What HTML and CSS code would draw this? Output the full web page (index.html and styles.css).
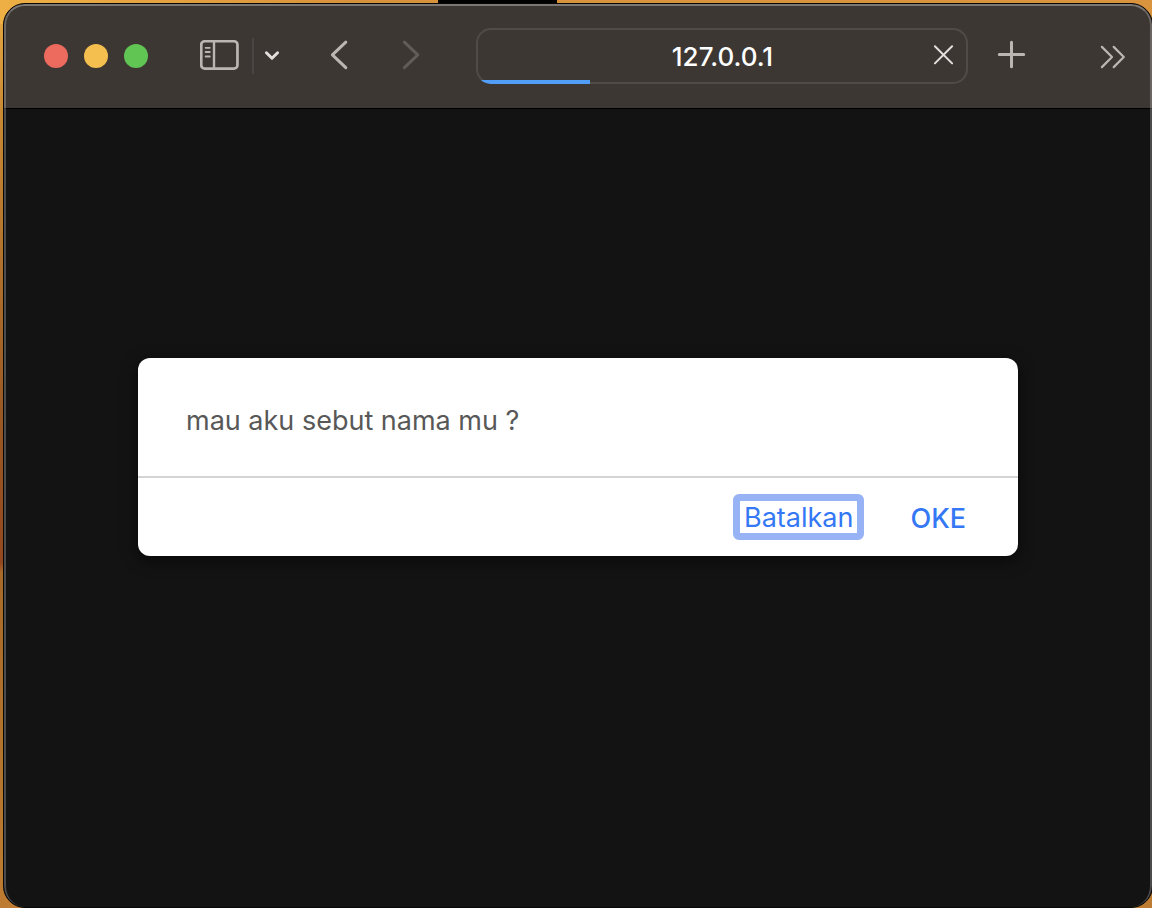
FILE: index.html
```html
<!DOCTYPE html>
<html lang="id">
<head>
<meta charset="utf-8">
<meta name="viewport" content="width=device-width, initial-scale=1">
<title>127.0.0.1</title>
<link rel="stylesheet" href="styles.css">
</head>
<body class="desktop">
<div class="notch"></div>
<div class="window">
  <header class="toolbar">
    <div class="lights">
      <button class="light close" aria-label="Tutup"></button>
      <button class="light minimize" aria-label="Perkecil"></button>
      <button class="light expand" aria-label="Perbesar"></button>
    </div>
    <button class="tool sidebar" aria-label="Bar samping">
      <svg width="40" height="32" viewBox="0 0 40 32" fill="none" stroke="#bcb6b2"><rect x="1.25" y="1.25" width="36.2" height="27.4" rx="3.5" stroke-width="2.7"/><path d="M14 1v28" stroke-width="2.4"/><path d="M5.6 7.8h4.2M5.6 12h4.2M5.6 16.5h4.2" stroke-width="1.8" stroke-linecap="round"/></svg>
    </button>
    <span class="divider"></span>
    <button class="tool groups" aria-label="Grup tab">
      <svg width="16" height="32" viewBox="0 0 16 32" fill="none" stroke="#e2dfdd" stroke-width="2.9" stroke-linecap="round" stroke-linejoin="round"><path d="M2.4 12.7 8 18.3l5.6-5.6"/></svg>
    </button>
    <button class="tool back" aria-label="Kembali">
      <svg width="24" height="32" viewBox="0 0 24 32" fill="none" stroke="#bcb6b2" stroke-width="3" stroke-linecap="round" stroke-linejoin="round"><path d="M18.8 2.2 5.4 14.9l13.4 12.7"/></svg>
    </button>
    <button class="tool forward" aria-label="Maju">
      <svg width="24" height="32" viewBox="0 0 24 32" fill="none" stroke="#625c59" stroke-width="3" stroke-linecap="round" stroke-linejoin="round"><path d="m5.4 2.2 13.4 12.7L5.4 27.6"/></svg>
    </button>
    <div class="field">
      <input class="address" type="text" value="127.0.0.1" aria-label="Alamat">
      <button class="tool" aria-label="Hentikan">
        <svg width="24" height="32" viewBox="0 0 24 32" fill="none" stroke="#e2dfdd" stroke-width="2" stroke-linecap="round"><path d="m2.9 6.2 17.2 17.2m0-17.2L2.9 23.4"/></svg>
      </button>
      <div class="progress" role="progressbar" aria-label="Memuat" aria-valuenow="23" style="width:23.2%"></div>
    </div>
    <button class="tool newtab" aria-label="Tab baru">
      <svg width="32" height="32" viewBox="0 0 32 32" fill="none" stroke="#bcb6b2" stroke-width="3" stroke-linecap="round"><path d="M15.5 2.3v24.4M3.3 14.5h24.4"/></svg>
    </button>
    <button class="tool more" aria-label="Lainnya">
      <svg width="28" height="32" viewBox="0 0 28 32" fill="none" stroke="#bcb6b2" stroke-width="2.2" stroke-linecap="round" stroke-linejoin="round"><path d="M2.9 6.9 13 17 2.9 27.1M14.7 6.9 24.8 17 14.7 27.1"/></svg>
    </button>
  </header>
  <main class="page">
    <div class="dialog" role="dialog" aria-labelledby="message">
      <p class="message" id="message">mau aku sebut nama mu ?</p>
      <div class="actions">
        <button class="action cancel">Batalkan</button>
        <button class="action confirm">OKE</button>
      </div>
    </div>
  </main>
</div>
</body>
</html>
```
FILE: styles.css
```css
* { box-sizing: border-box; }

button, input {
  margin: 0;
  padding: 0;
  border: 0;
  background: none;
  font: inherit;
  color: inherit;
}

.desktop {
  margin: 0;
  min-height: 100vh;
  display: flex;
  flex-direction: column;
  overflow: hidden;
  font-family: Inter, "Liberation Sans", sans-serif;
  background:
    linear-gradient(90deg, #eeb045, #d9923c 30%, #d9943d) top / 100% 24px no-repeat,
    linear-gradient(#e8ab43, #c98a35 12%, #9a5a24 45%, #94481f 62%, #a86a28 63%, #bd7c31);
}

.notch {
  width: 119px;
  height: 3px;
  margin-left: 38%;
  background: #000;
}

.window {
  position: relative;
  flex: 1;
  display: flex;
  flex-direction: column;
  margin: 0 -1px 0 3px;
  border: 1px solid #080706;
  border-radius: 22px;
  overflow: hidden;
  background: #131313;
}

/* Translucent rim drawn over the toolbar and the page */
.window::after {
  content: "";
  position: absolute;
  inset: 0;
  border: 2px solid rgba(255, 255, 255, 0.24);
  border-top-color: rgba(255, 255, 255, 0.32);
  border-bottom-width: 0;
  border-radius: 21px;
  pointer-events: none;
}

.toolbar {
  display: flex;
  align-items: center;
  height: 105px;
  padding: 0 25px 0 40px;
  background: #3d3734;
  border-bottom: 1px solid #000;
}

.lights { display: flex; gap: 16px; margin-right: 52px; }
.light { width: 24px; height: 24px; border-radius: 50%; }
.close { background: #ed6a5e; }
.minimize { background: #f5bf4f; }
.expand { background: #61c554; }

.tool { display: block; flex: none; }
.tool svg { display: block; }
.divider { width: 2px; height: 36px; margin: 0 10px 0 12px; background: #4a4542; }
.back { margin: 0 48px 0 47px; }
.newtab { margin: 0 71px 0 28px; }

.field {
  position: relative;
  flex: 1;
  min-width: 0;
  display: flex;
  align-items: center;
  height: 56px;
  margin-left: 53px;
  padding: 0 12px 0 37px;
  border-radius: 15px;
  box-shadow: inset 0 0 0 2px #514b48;
  overflow: hidden;
}

.address {
  flex: 1;
  min-width: 0;
  height: 32px;
  text-align: center;
  font-size: 26px;
  font-weight: 500;
  color: #fff;
  outline: 0;
}

.progress {
  position: absolute;
  left: 0;
  bottom: 0;
  height: 4px;
  background: #509ef8;
}

.page { flex: 1; padding: 249px 134px 0; }

.dialog {
  max-width: 880px;
  margin: 0 auto;
  border-radius: 12px;
  background: #fff;
  box-shadow: 0 4px 16px rgba(0, 0, 0, 0.6);
}

.message {
  margin: 0;
  padding: 45px 48px 37px;
  border-bottom: 2px solid #d4d4d4;
  font-size: 27px;
  line-height: 36px;
  font-weight: 400;
  color: #585858;
}

.actions {
  display: flex;
  justify-content: flex-end;
  gap: 36px;
  padding: 16px 42px 16px 48px;
}

.action {
  height: 46px;
  padding: 3px 10px 0;
  border-radius: 6px;
  font-size: 27px;
  line-height: 32px;
  color: #3478f6;
}

.cancel { padding: 2px 4px 0; border: 7px solid #97b3f6; font-weight: 400; line-height: 30px; }
.confirm { font-weight: 500; }
```
